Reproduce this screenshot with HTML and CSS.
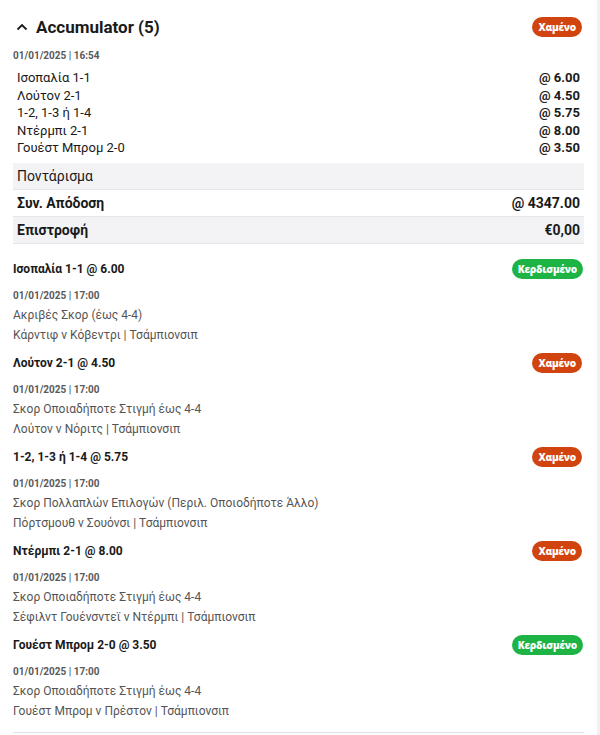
FILE: index.html
```html
<!DOCTYPE html>
<html lang="el">
<head>
    <meta charset="utf-8">
    <title>Accumulator</title>
    <link rel="stylesheet" href="styles.css">
</head>
<body>
    <div class="bet-card">
        <div class="bet-head">
            <div class="bet-title">
                <svg class="chevron" width="12" height="8" viewBox="0 0 12 8"><polyline points="1.5,6.5 6,2 10.5,6.5" fill="none" stroke="#1a1a1a" stroke-width="1.8"/></svg>
                <span>Accumulator (5)</span>
            </div>
            <span class="badge badge-lost">Χαμένο</span>
        </div>
        <div class="bet-date">01/01/2025 | 16:54</div>
        <div class="sel-list">
            <div class="sel-row"><span>Ισοπαλία 1-1</span><b>@ 6.00</b></div>
            <div class="sel-row"><span>Λούτον 2-1</span><b>@ 4.50</b></div>
            <div class="sel-row"><span>1-2, 1-3 ή 1-4</span><b>@ 5.75</b></div>
            <div class="sel-row"><span>Ντέρμπι 2-1</span><b>@ 8.00</b></div>
            <div class="sel-row"><span>Γουέστ Μπρομ 2-0</span><b>@ 3.50</b></div>
        </div>
        <div class="stake-box">
            <div class="stake-row grey"><span>Ποντάρισμα</span><span></span></div>
            <div class="stake-row strong"><span>Συν. Απόδοση</span><span>@ 4347.00</span></div>
            <div class="stake-row grey strong"><span>Επιστροφή</span><span>€0,00</span></div>
        </div>
        <div class="legs">
            <div class="leg">
                <div class="leg-head"><span class="leg-title">Ισοπαλία 1-1 @ 6.00</span><span class="badge badge-won">Κερδισμένο</span></div>
                <div class="leg-date">01/01/2025 | 17:00</div>
                <div class="leg-text">Ακριβές Σκορ (έως 4-4)</div>
                <div class="leg-text">Κάρντιφ ν Κόβεντρι | Τσάμπιονσιπ</div>
            </div>
            <div class="leg">
                <div class="leg-head"><span class="leg-title">Λούτον 2-1 @ 4.50</span><span class="badge badge-lost">Χαμένο</span></div>
                <div class="leg-date">01/01/2025 | 17:00</div>
                <div class="leg-text">Σκορ Οποιαδήποτε Στιγμή έως 4-4</div>
                <div class="leg-text">Λούτον ν Νόριτς | Τσάμπιονσιπ</div>
            </div>
            <div class="leg">
                <div class="leg-head"><span class="leg-title">1-2, 1-3 ή 1-4 @ 5.75</span><span class="badge badge-lost">Χαμένο</span></div>
                <div class="leg-date">01/01/2025 | 17:00</div>
                <div class="leg-text">Σκορ Πολλαπλών Επιλογών (Περιλ. Οποιοδήποτε Άλλο)</div>
                <div class="leg-text">Πόρτσμουθ ν Σουόνσι | Τσάμπιονσιπ</div>
            </div>
            <div class="leg">
                <div class="leg-head"><span class="leg-title">Ντέρμπι 2-1 @ 8.00</span><span class="badge badge-lost">Χαμένο</span></div>
                <div class="leg-date">01/01/2025 | 17:00</div>
                <div class="leg-text">Σκορ Οποιαδήποτε Στιγμή έως 4-4</div>
                <div class="leg-text">Σέφιλντ Γουένσντεϊ ν Ντέρμπι | Τσάμπιονσιπ</div>
            </div>
            <div class="leg">
                <div class="leg-head"><span class="leg-title">Γουέστ Μπρομ 2-0 @ 3.50</span><span class="badge badge-won">Κερδισμένο</span></div>
                <div class="leg-date">01/01/2025 | 17:00</div>
                <div class="leg-text">Σκορ Οποιαδήποτε Στιγμή έως 4-4</div>
                <div class="leg-text">Γουέστ Μπρομ ν Πρέστον | Τσάμπιονσιπ</div>
            </div>
        </div>
    </div>
</body>
</html>
```

FILE: styles.css
```css
body {
    margin: 0;
    background-color: #f1f1f4;
    font-family: Roboto, "Noto Sans", sans-serif;
    color: #1a1a1a;
}
.bet-card {
    width: 597px;
    height: 735px;
    box-sizing: border-box;
    background-color: #fff;
    padding: 17px 13px 0 13px;
}
.bet-head {
    display: flex;
    justify-content: space-between;
    align-items: center;
    height: 20px;
}
.bet-title {
    display: flex;
    align-items: center;
    gap: 8px;
    padding-left: 3px;
    font-size: 17px;
    font-weight: 700;
}
.chevron {
    margin-top: -1px;
}
.badge {
    display: flex;
    align-items: center;
    justify-content: center;
    height: 20px;
    padding: 0 6px;
    border-radius: 10px;
    color: #fff;
    font-family: "Open Sans", sans-serif;
    font-size: 10px;
    font-weight: 800;
    letter-spacing: -0.2px;
}
.badge-lost {
    background-color: #d2440f;
    margin-right: 2px;
}
.badge-won {
    background-color: #1db445;
    margin-right: 1px;
}
.bet-date {
    margin-top: 12px;
    line-height: 14px;
    font-size: 10px;
    font-weight: 700;
    color: #5a5a5a;
}
.sel-list {
    margin-top: 6px;
    padding: 0 4px;
}
.sel-row {
    display: flex;
    justify-content: space-between;
    line-height: 17.5px;
    font-size: 13px;
}
.sel-row b {
    font-weight: 700;
}
.stake-box {
    margin-top: 6px;
}
.stake-row {
    display: flex;
    justify-content: space-between;
    align-items: center;
    height: 26px;
    padding: 0 4px;
    border-bottom: 1px solid #e6e6ea;
    font-size: 14px;
}
.stake-row.grey {
    background-color: #f3f3f6;
}
.stake-row.strong {
    font-weight: 700;
}
.legs {
    margin-top: 15px;
    border-bottom: 1px solid #e6e6ea;
    padding-bottom: 3px;
}
.leg {
    padding-bottom: 8px;
}
.leg-head {
    display: flex;
    justify-content: space-between;
    align-items: center;
    height: 20px;
}
.leg-title {
    font-size: 12px;
    font-weight: 700;
}
.leg-date {
    margin-top: 10px;
    margin-bottom: 2px;
    line-height: 14px;
    font-size: 10px;
    font-weight: 700;
    color: #5a5a5a;
}
.leg-text {
    line-height: 20px;
    font-size: 12px;
    color: #555;
}
```
